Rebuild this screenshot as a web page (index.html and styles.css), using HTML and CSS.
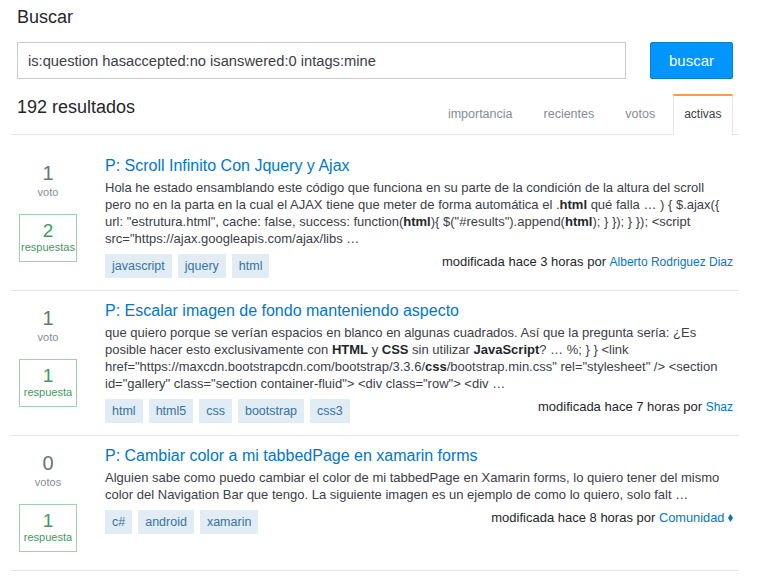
FILE: index.html
```html
<!DOCTYPE html>
<html lang="es">
<head>
  <meta charset="UTF-8">
  <title>Buscar</title>
  <link rel="stylesheet" href="styles.css">
</head>
<body>
  <div id="content">
    <h1>Buscar</h1>

    <!-- Search form -->
    <form class="search-row">
      <input class="search-input" type="text" value="is:question hasaccepted:no isanswered:0 intags:mine">
      <button class="search-btn" type="button">buscar</button>
    </form>

    <!-- Count and sort tabs -->
    <div class="subheader">
      <h2>192 resultados</h2>
      <div class="tabs">
        <a class="tab">importancia</a>
        <a class="tab">recientes</a>
        <a class="tab">votos</a>
        <a class="tab active">activas</a>
      </div>
    </div>

    <div class="result">
      <div class="stats">
        <div class="votes"><strong>1</strong><span>voto</span></div>
        <div class="answers"><strong>2</strong><span>respuestas</span></div>
      </div>
      <div class="summary">
        <h3><a>P: Scroll Infinito Con Jquery y Ajax</a></h3>
        <div class="excerpt">Hola he estado ensamblando este código que funciona en su parte de la condición de la altura del scroll pero no en la parta en la cual el AJAX tiene que meter de forma automática el .<b>html</b> qué falla … ) { $.ajax({ url: "estrutura.html", cache: false, success: function(<b>html</b>){ $("#results").append(<b>html</b>); } }); } }); &lt;script src="https://ajax.googleapis.com/ajax/libs …</div>
        <div class="meta">
          <div class="tags"><a class="tag">javascript</a><a class="tag">jquery</a><a class="tag">html</a></div>
          <div class="modified">modificada hace 3 horas por <a>Alberto Rodriguez Diaz</a></div>
        </div>
      </div>
    </div>

    <div class="result">
      <div class="stats">
        <div class="votes"><strong>1</strong><span>voto</span></div>
        <div class="answers"><strong>1</strong><span>respuesta</span></div>
      </div>
      <div class="summary">
        <h3><a>P: Escalar imagen de fondo manteniendo aspecto</a></h3>
        <div class="excerpt">que quiero porque se verían espacios en blanco en algunas cuadrados. Así que la pregunta sería: ¿Es posible hacer esto exclusivamente con <b>HTML</b> y <b>CSS</b> sin utilizar <b>JavaScript</b>? … %; } } &lt;link href="https://maxcdn.bootstrapcdn.com/bootstrap/3.3.6/<b>css</b>/bootstrap.min.css" rel="stylesheet" /> &lt;section id="gallery" class="section container-fluid"> &lt;div class="row"> &lt;div …</div>
        <div class="meta">
          <div class="tags"><a class="tag">html</a><a class="tag">html5</a><a class="tag">css</a><a class="tag">bootstrap</a><a class="tag">css3</a></div>
          <div class="modified">modificada hace 7 horas por <a>Shaz</a></div>
        </div>
      </div>
    </div>

    <div class="result">
      <div class="stats">
        <div class="votes"><strong>0</strong><span>votos</span></div>
        <div class="answers"><strong>1</strong><span>respuesta</span></div>
      </div>
      <div class="summary">
        <h3><a>P: Cambiar color a mi tabbedPage en xamarin forms</a></h3>
        <div class="excerpt">Alguien sabe como puedo cambiar el color de mi tabbedPage en Xamarin forms, lo quiero tener del mismo color del Navigation Bar que tengo. La siguiente imagen es un ejemplo de como lo quiero, solo falt …</div>
        <div class="meta">
          <div class="tags"><a class="tag">c#</a><a class="tag">android</a><a class="tag">xamarin</a></div>
          <div class="modified">modificada hace 8 horas por <a class="mod">Comunidad</a> <svg class="diamond" width="5" height="8" viewBox="0 0 5 8"><polygon points="2.5,0 5,4 2.5,8 0,4"/></svg></div>
        </div>
      </div>
    </div>
  </div>
</body>
</html>
```

FILE: styles.css
```css
:root {
  --link-color: #0077cc;
  --text-color: #3b4045;
  --border-color: #e4e6e8;
  --green: #3f9a5f;
}

body {
  font-family: 'Liberation Sans', Arial, sans-serif;
  font-size: 13px;
  margin: 0;
  color: var(--text-color);
  background: #fff;
}

#content {
  width: 728px;
  margin-left: 11px;
}

h1 {
  font-size: 18px;
  font-weight: 400;
  line-height: 20px;
  color: #242729;
  margin: 0;
  padding: 7px 0 0 6px;
}

/* Search form */
.search-row {
  display: flex;
  justify-content: space-between;
  margin: 15px 6px 0 6px;
}

.search-input {
  width: 609px;
  height: 37px;
  box-sizing: border-box;
  padding: 0 10px;
  border: 1px solid #c8ccd0;
  font-family: inherit;
  font-size: 14.7px;
  color: #3b4045;
  outline: none;
}

.search-btn {
  width: 83px;
  height: 37px;
  border: 1px solid #0a7fd0;
  border-radius: 2px;
  background: #0095ff;
  color: #fff;
  font-family: inherit;
  font-size: 15px;
  padding: 0;
}

/* Count and tabs */
.subheader {
  display: flex;
  justify-content: space-between;
  align-items: flex-end;
  height: 40px;
  margin-top: 15px;
  margin-bottom: 11px;
  border-bottom: 1px solid var(--border-color);
}

.subheader h2 {
  font-size: 18px;
  font-weight: 400;
  line-height: 20px;
  color: #242729;
  margin: 0 0 17px 6px;
}

.tabs {
  display: flex;
  margin-right: 6px;
  margin-bottom: -1px;
}

.tab {
  font-size: 12.5px;
  line-height: 16px;
  color: #848d95;
  padding: 12px 15.5px 13px 15.5px;
}

.tab.active {
  font-size: 12px;
  color: #3b4045;
  background: #fff;
  border: 1px solid var(--border-color);
  border-top: 2px solid #f69c55;
  border-bottom: none;
  padding: 10px 10.5px 13px 10.5px;
  margin-left: 2px;
}

/* Result rows */
.result {
  display: flex;
  padding: 9px 6px 12px 0;
  border-bottom: 1px solid var(--border-color);
}

.stats {
  width: 94px;
  padding: 6px 0 6px 8px;
  box-sizing: border-box;
  flex-shrink: 0;
}

.votes, .answers {
  width: 58px;
  text-align: center;
}

.votes strong, .answers strong {
  display: block;
  font-weight: 400;
}

.votes strong {
  font-size: 20px;
  line-height: 24px;
  color: #6a737c;
}

.votes span {
  display: block;
  font-size: 11px;
  line-height: 14px;
  color: #848d95;
}

.answers {
  margin-top: 15px;
  height: 48px;
  box-sizing: border-box;
  border: 1px solid #9fd0ae;
  color: var(--green);
  padding-top: 6px;
}

.answers strong {
  font-size: 19px;
  line-height: 20px;
}

.answers span {
  display: block;
  font-size: 11px;
  line-height: 13px;
}

.summary {
  flex: 1;
}

h3 {
  font-size: 16px;
  font-weight: 400;
  line-height: 22px;
  margin: 0 0 2px 0;
}

a {
  color: var(--link-color);
}

.excerpt {
  line-height: 17px;
  color: #3b4045;
}

.excerpt b {
  color: #242729;
}

.meta {
  display: flex;
  justify-content: space-between;
  align-items: flex-start;
  margin-top: 7px;
}

.tags {
  display: flex;
  gap: 6px;
}

.tag {
  font-size: 12.5px;
  line-height: 16px;
  padding: 4px 7px;
  background: #e1ecf4;
  color: #39739d;
}

.modified {
  line-height: 15px;
  color: #242729;
}

.modified a {
  font-size: 12px;
}

.modified a.mod {
  font-size: 12.8px;
}

.diamond {
  fill: var(--link-color);
}
```
